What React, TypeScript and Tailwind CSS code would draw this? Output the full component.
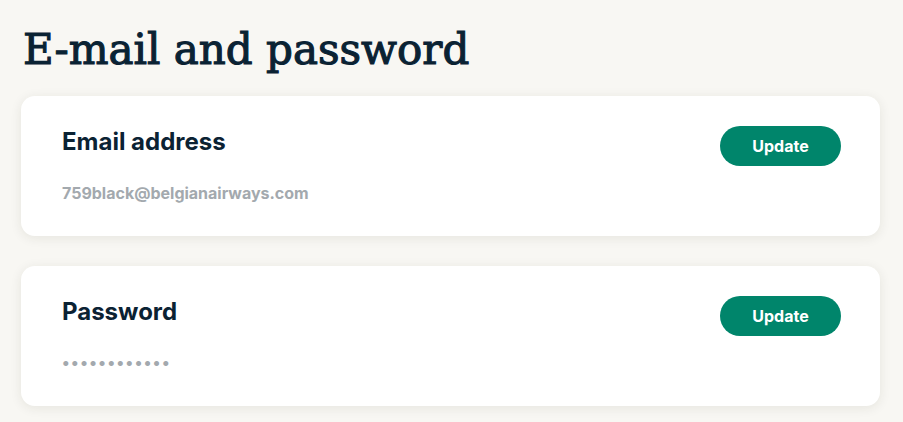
import React from "react";

type Row = { label: string; value: string; dots?: boolean };

const rows: Row[] = [
  { label: "Email address", value: "759black@belgianairways.com" },
  { label: "Password", value: "••••••••••••", dots: true },
];

const SettingCard = ({ label, value, dots }: Row) => (
  <div className="flex items-start justify-between rounded-[14px] bg-white pl-[41px] pr-[39px] pt-[30px] h-[140px] shadow-[0_2px_12px_rgba(40,40,20,0.09)]">
    <div className="flex flex-col">
      <div className="pt-[1px] text-[24px] font-bold leading-[30px] text-[#0b2233]">{label}</div>
      {dots ? (
        <div className="mt-[25px] text-[16px] font-bold leading-[20px] tracking-[1.5px] text-[#a3a9ae]">{value}</div>
      ) : (
        <div className="mt-[26px] text-[16px] font-bold leading-[20px] text-[#a3a9ae]">{value}</div>
      )}
    </div>
    <button className="h-[40px] w-[121px] rounded-full bg-[#00856b] text-[16px] font-bold text-white">
      Update
    </button>
  </div>
);

const App = () => {
  return (
    <div className="min-h-screen bg-[#f8f7f3] px-[21px] pt-[22px] pb-4 font-['Inter',sans-serif]">
      <h1 className="mb-[18px] pl-[2px] font-['DejaVu_Serif',serif] text-[42px] font-normal leading-[56px] text-[#0a2233] [-webkit-text-stroke:1.1px_#0a2233]">
        E-mail and password
      </h1>
      <div className="mr-[2px] flex flex-col gap-[30px]">
        {rows.map((r) => (
          <SettingCard key={r.label} {...r} />
        ))}
      </div>
    </div>
  );
};

export default App;
